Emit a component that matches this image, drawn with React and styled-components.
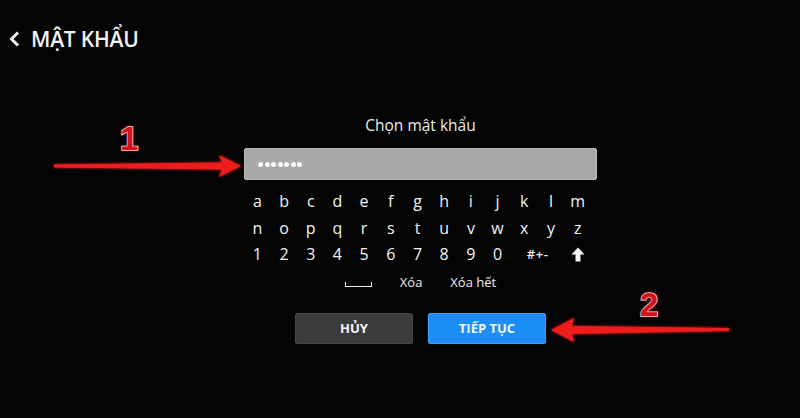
import React from "react";
import styled, { createGlobalStyle } from "styled-components";

const GlobalStyle = createGlobalStyle`
  html, body {
    margin: 0;
    padding: 0;
    background: #040404;
  }
  * {
    box-sizing: border-box;
  }
`;

const Screen = styled.div`
  position: relative;
  width: 800px;
  height: 418px;
  overflow: hidden;
  background: #040404;
  font-family: "Open Sans", "Noto Sans", sans-serif;
  color: #f2f2f2;
`;

const Header = styled.div`
  display: flex;
  align-items: center;
  gap: 10px;
  padding: 19px 0 0 8px;
  height: 58px;
`;

const HeaderTitle = styled.h1`
  margin: 0;
  font-size: 21px;
  font-weight: 600;
  letter-spacing: -0.2px;
  line-height: 24px;
`;

const Main = styled.div`
  display: flex;
  flex-direction: column;
  align-items: center;
  padding-left: 41px;
  padding-top: 57px;
`;

const Label = styled.div`
  font-size: 15.5px;
  line-height: 20px;
  color: #ededed;
`;

const Field = styled.div`
  margin-top: 13px;
  width: 353px;
  height: 32px;
  background: #a9a9a9;
  border: 1px solid #b8b8b8;
  border-radius: 2px;
  display: flex;
  align-items: center;
  padding-left: 13px;
  gap: 1.5px;
`;

const Dot = styled.span`
  width: 5px;
  height: 5px;
  border-radius: 50%;
  background: #fafafa;
`;

const Keys = styled.div`
  margin-top: 8px;
  width: 347px;
  margin-right: 6px;
  display: grid;
  grid-template-columns: repeat(13, 1fr);
  grid-auto-rows: 26.6px;
`;

const Key = styled.div`
  grid-column: span ${(p) => p.span || 1};
  display: flex;
  align-items: center;
  justify-content: center;
  font-size: 16px;
  color: #f4f4f4;
  font-weight: 500;
`;

const SmallKey = styled(Key)`
  font-size: 13px;
  font-weight: 600;
  letter-spacing: 0.5px;
`;

const ActionRow = styled.div`
  display: flex;
  align-items: center;
  justify-content: center;
  height: 28px;
  margin-top: 0;
  gap: 28px;
`;

const SpaceKey = styled.span`
  width: 27px;
  height: 5px;
  border: 1.5px solid #ececec;
  border-top: none;
  margin-top: 5px;
`;

const ActionText = styled.span`
  font-size: 13px;
  color: #ececec;
`;

const Buttons = styled.div`
  display: flex;
  gap: 15px;
  margin-top: 17px;
`;

const Button = styled.div`
  width: 118px;
  height: 31px;
  display: flex;
  align-items: center;
  justify-content: center;
  font-size: 13px;
  font-weight: 700;
  color: #f6f6f6;
  border-radius: 2px;
  background: ${(p) => (p.primary ? "#1c8cf6" : "#3b3b3b")};
  border: 1px solid ${(p) => (p.primary ? "#3aa0ff" : "#474747")};
`;

const Overlay = styled.svg`
  position: absolute;
  left: 0;
  top: 0;
  pointer-events: none;
`;

const Badge = styled.span`
  position: absolute;
  left: ${(p) => p.x}px;
  top: ${(p) => p.y}px;
  font-family: "Liberation Sans", Arial, sans-serif;
  font-weight: 700;
  font-size: 33px;
  line-height: 1;
  color: #d2141a;
  -webkit-text-stroke: 1.5px #ffffff;
  paint-order: stroke fill;
  text-shadow: 0 0 4px rgba(255, 40, 40, 0.6);
`;

const Chevron = () => (
  <svg width="13" height="18" viewBox="0 0 13 18">
    <path d="M10 2.5 L3.5 9 L10 15.5" fill="none" stroke="#f2f2f2" strokeWidth="3" />
  </svg>
);

const ShiftArrow = () => (
  <svg width="14" height="15" viewBox="0 0 14 15">
    <path d="M7 0.5 L13.5 7.5 L9.5 7.5 L9.5 14.5 L4.5 14.5 L4.5 7.5 L0.5 7.5 Z" fill="#f6f6f6" />
  </svg>
);

const rows = [
  "abcdefghijklm".split(""),
  "nopqrstuvwxyz".split(""),
];

const App = () => {
  return (
    <>
      <GlobalStyle />
      <Screen>
        <Header>
          <Chevron />
          <HeaderTitle>MẬT KHẨU</HeaderTitle>
        </Header>
        <Main>
          <Label>Chọn mật khẩu</Label>
          <Field>
            {Array.from({ length: 7 }).map((_, i) => (
              <Dot key={i} />
            ))}
          </Field>
          <Keys>
            {rows.map((row) =>
              row.map((ch) => <Key key={ch}>{ch}</Key>)
            )}
            {"1234567890".split("").map((ch) => (
              <Key key={ch}>{ch}</Key>
            ))}
            <SmallKey span={2}>#+-</SmallKey>
            <Key>
              <ShiftArrow />
            </Key>
          </Keys>
          <ActionRow>
            <SpaceKey />
            <ActionText>Xóa</ActionText>
            <ActionText>Xóa hết</ActionText>
          </ActionRow>
          <Buttons>
            <Button>HỦY</Button>
            <Button primary>TIẾP TỤC</Button>
          </Buttons>
        </Main>

        <Overlay width="800" height="418" viewBox="0 0 800 418">
          <defs>
            <filter id="glow" x="-10%" y="-50%" width="120%" height="200%">
              <feGaussianBlur stdDeviation="1.6" result="b" />
              <feMerge>
                <feMergeNode in="b" />
                <feMergeNode in="SourceGraphic" />
              </feMerge>
            </filter>
          </defs>
          <path
            d="M54 164.5 L222 162.5 L219 155 L241 166 L219 177 L222 169.5 L54 167.5 Z"
            fill="#ee1c1c"
            filter="url(#glow)"
          />
          <path
            d="M729 328 L572 326 L574 318 L551 330 L574 342 L572 334 L729 331 Z"
            fill="#ee1c1c"
            filter="url(#glow)"
          />
        </Overlay>
        <Badge x={120} y={122}>1</Badge>
        <Badge x={640} y={288}>2</Badge>
      </Screen>
    </>
  );
};

export default App;
